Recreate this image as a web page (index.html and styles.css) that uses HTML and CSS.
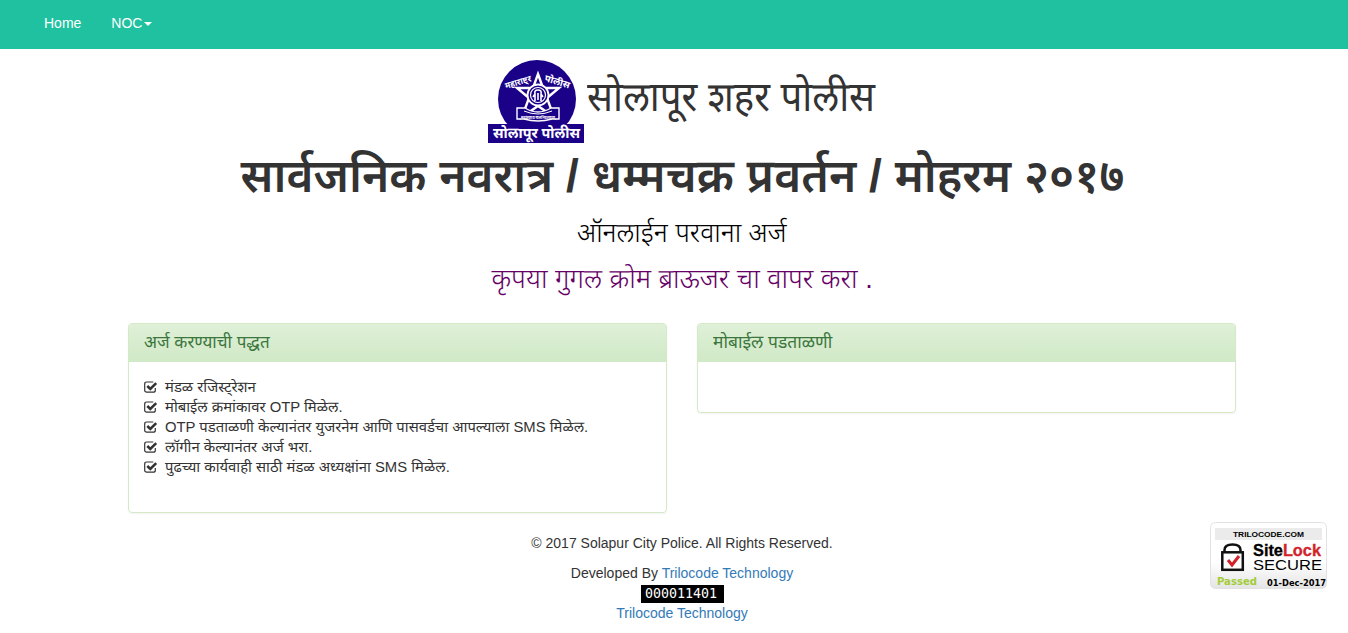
FILE: index.html
```
<!DOCTYPE html>
<html lang="mr">
<head>
<meta charset="utf-8">
<title>सोलापूर शहर पोलीस</title>
<link rel="stylesheet" href="styles.css">
</head>
<body>
<nav class="navbar">
  <a class="nav-link" href="#">Home</a>
  <a class="nav-link" href="#">NOC<span class="caret"></span></a>
</nav>
<main class="container">
  <header class="masthead">
    <div class="brand">
      <svg class="emblem" width="96" height="84" viewBox="0 0 96 84">
        <circle cx="49" cy="40" r="39" fill="#1b0187"/>
        <g fill="none" stroke="#fff">
          <path d="M50 15L55 29H71L59 39L66 58L50 47L34 58L41 39L29 29H45Z" stroke-width="2.400"/>
          <circle cx="50" cy="36" r="10.500" fill="#1b0187" stroke-width="1.800"/>
          <circle cx="50" cy="36" r="7.500" stroke-width="1.200"/>
          <path d="M47 42V35Q46 31 50 31Q54 31 53 35V42M50 34V41M45 38L47 35M55 38L53 35" stroke-width="1.600"/>
          <path d="M29 49H37Q50 57 63 49H71V60H64Q50 64 36 60H29Z" fill="#1b0187" stroke-width="1.400"/>
          <path d="M36 52Q50 58 64 52" stroke-width="1"/>
        </g>
        <g class="emblem-text">
          <text transform="translate(18 30) rotate(-17)" font-size="9" textLength="27" lengthAdjust="spacingAndGlyphs">महाराष्ट्र</text>
          <text transform="translate(56 22) rotate(17)" font-size="9.500" textLength="26" lengthAdjust="spacingAndGlyphs">पोलीस</text>
          <text x="33" y="60" font-size="5" textLength="34" lengthAdjust="spacingAndGlyphs">सद्रक्षणाय खलनिग्रहणाय</text>
        </g>
        <rect y="65" width="96" height="19" fill="#1b0187"/>
        <text class="emblem-text" x="5" y="79" font-size="15" textLength="87" lengthAdjust="spacingAndGlyphs">सोलापूर पोलीस</text>
      </svg>
      <span class="brand-name">सोलापूर शहर पोलीस</span>
    </div>
    <h1 class="event">सार्वजनिक नवरात्र / धम्मचक्र प्रवर्तन / मोहरम २०१७</h1>
    <h2 class="subtitle">ऑनलाईन परवाना अर्ज</h2>
    <h2 class="notice">कृपया गुगल क्रोम ब्राऊजर चा वापर करा .</h2>
  </header>
  <svg class="symbols" width="0" height="0">
    <symbol id="check" viewBox="0 0 14 12">
      <path d="M11.300 7V9.200Q11.300 11.200 9.300 11.200H2.700Q.7 11.200 .7 9.200V3Q.7 1 2.700 1H9.300" fill="none" stroke="#333" stroke-width="1.200"/>
      <path d="M3.300 5L6.300 8L12.200 2.100" fill="none" stroke="#333" stroke-width="2.500"/>
    </symbol>
  </svg>
  <div class="row">
    <section class="panel panel-steps">
      <h3 class="panel-heading"><span class="title-steps">अर्ज करण्याची पद्धत</span></h3>
      <ul class="steps">
        <li><svg class="check"><use href="#check"/></svg><span>मंडळ रजिस्ट्रेशन</span></li>
        <li><svg class="check"><use href="#check"/></svg><span>मोबाईल क्रमांकावर OTP मिळेल.</span></li>
        <li><svg class="check"><use href="#check"/></svg><span>OTP पडताळणी केल्यानंतर युजरनेम आणि पासवर्डचा आपल्याला SMS मिळेल.</span></li>
        <li><svg class="check"><use href="#check"/></svg><span>लॉगीन केल्यानंतर अर्ज भरा.</span></li>
        <li><svg class="check"><use href="#check"/></svg><span>पुढच्या कार्यवाही साठी मंडळ अध्यक्षांना SMS मिळेल.</span></li>
      </ul>
    </section>
    <section class="panel panel-mobile">
      <h3 class="panel-heading"><span class="title-mobile">मोबाईल पडताळणी</span></h3>
    </section>
  </div>
  <footer class="footer">
    <p class="copyright">© 2017 Solapur City Police. All Rights Reserved.</p>
    <p class="credit">Developed By <a href="#">Trilocode Technology</a></p>
    <span class="counter">000011401</span>
    <a class="credit-link" href="#">Trilocode Technology</a>
  </footer>
</main>
<svg class="sitelock" width="118" height="68" viewBox="0 0 118 68">
  <defs><linearGradient id="seal" x2="0" y2="1"><stop offset=".6" stop-color="#fff"/><stop offset="1" stop-color="#e4e4e4"/></linearGradient></defs>
  <rect x=".5" y=".5" width="116" height="66" rx="5" fill="url(#seal)" stroke="#e2e2e2"/>
  <rect x="5" y="6" width="107" height="12" fill="#ebebeb"/>
  <text x="23" y="15" class="seal-bold" font-size="8" textLength="71" lengthAdjust="spacingAndGlyphs">TRILOCODE.COM</text>
  <path d="M14.500 31V28Q14.500 22.500 22.500 22.500Q30.500 22.500 30.500 28V31" fill="none" stroke="#111" stroke-width="2.500"/>
  <rect x="12.300" y="30.300" width="20.500" height="17.500" fill="#fff" stroke="#111" stroke-width="2.500"/>
  <path d="M18 38L22 43L29 34" fill="none" stroke="#d2232a" stroke-width="3"/>
  <text x="43" y="34" class="seal-bold seal-name" font-size="16" textLength="68" lengthAdjust="spacingAndGlyphs">Site<tspan class="seal-lock">Lock</tspan></text>
  <text x="43" y="48" class="seal-plain" font-size="14" textLength="69" lengthAdjust="spacingAndGlyphs">SECURE</text>
  <text x="7" y="63" class="seal-date" font-size="10" textLength="40" lengthAdjust="spacingAndGlyphs" fill="#a4cb39">Passed</text>
  <text x="57" y="64" class="seal-date" font-size="9" textLength="59" lengthAdjust="spacingAndGlyphs">01-Dec-2017</text>
</svg>
</body>
</html>
```
FILE: styles.css
```
* { box-sizing: border-box; }
body { margin: 0; height: 633px; overflow: hidden; position: relative; background: #fff; color: #333; font: 14px/20px "Liberation Sans", "Noto Sans Devanagari", "Noto Sans", sans-serif; }
a { color: #337ab7; text-decoration: none; }
h1, h2, h3, p, ul { margin: 0; padding: 0; }
.navbar { height: 49px; padding: 13px 44px 0; display: flex; gap: 30px; background: #1fc1a0; }
.nav-link { color: #fff; }
.caret { display: inline-block; margin-left: 2px; vertical-align: middle; border-top: 4px solid; border-left: 4px solid transparent; border-right: 4px solid transparent; }
.container { width: 1108px; margin-left: 128px; }
.masthead { height: 274px; display: flex; flex-direction: column; align-items: center; white-space: nowrap; }
.brand { display: flex; width: 388px; height: 95px; padding-top: 10px; gap: 3px; }
.emblem { flex: none; }
.emblem-text { fill: #fff; font-family: "Noto Sans Devanagari", "Noto Sans", sans-serif; font-weight: 700; }
.brand-name { font-size: 41px; line-height: 76px; font-weight: 400; transform: scaleX(.937); transform-origin: left; }
.event { font-size: 47px; line-height: 64px; font-weight: 600; transform: scaleX(.981); }
.subtitle { font-size: 27px; line-height: 46px; padding-top: 2px; font-weight: 300; color: #000; transform: scaleX(.991); }
.notice { font-size: 27px; line-height: 46px; font-weight: 300; color: #660066; transform: scaleX(1.003); }
.symbols { display: none; }
.row { display: grid; grid-template-columns: 539px 539px; gap: 30px; align-items: start; height: 190px; }
.panel { border: 1px solid #d6e9c6; border-radius: 4px; box-shadow: 0 1px 2px rgba(0,0,0,.05); overflow: hidden; }
.panel-steps { height: 190px; }
.panel-mobile { height: 90px; }
.panel-heading { height: 38px; padding: 0 15px; color: #3c763d; font-size: 18px; line-height: 36px; font-weight: 400; background: linear-gradient(#dff0d8, #d0e9c6); }
.title-steps, .title-mobile { display: inline-block; transform-origin: left; }
.title-steps { transform: scaleX(.945); }
.title-mobile { transform: scaleX(.97); }
.steps { list-style: none; padding: 15px; }
.steps li { display: flex; align-items: center; height: 20px; gap: 7px; white-space: nowrap; font-size: 14.85px; }
.check { width: 14px; height: 12px; }
.footer { display: flex; flex-direction: column; align-items: center; padding-top: 20px; }
.copyright { margin-bottom: 10px; }
.credit { margin-bottom: 2px; }
.counter { width: 83px; height: 18px; padding-right: 2px; background: #000; color: #fff; text-align: center; font: 13.3px/18px "DejaVu Sans Mono", monospace; }
.sitelock { position: absolute; left: 1210px; top: 522px; }
.seal-bold { font-family: "Liberation Sans", sans-serif; font-weight: 700; }
.seal-name { stroke: #000; stroke-width: .3px; }
.seal-lock { fill: #d2232a; stroke: #d2232a; }
.seal-plain { font-family: "Liberation Sans", sans-serif; }
.seal-date { font-family: "DejaVu Sans", sans-serif; font-weight: 700; }
```
